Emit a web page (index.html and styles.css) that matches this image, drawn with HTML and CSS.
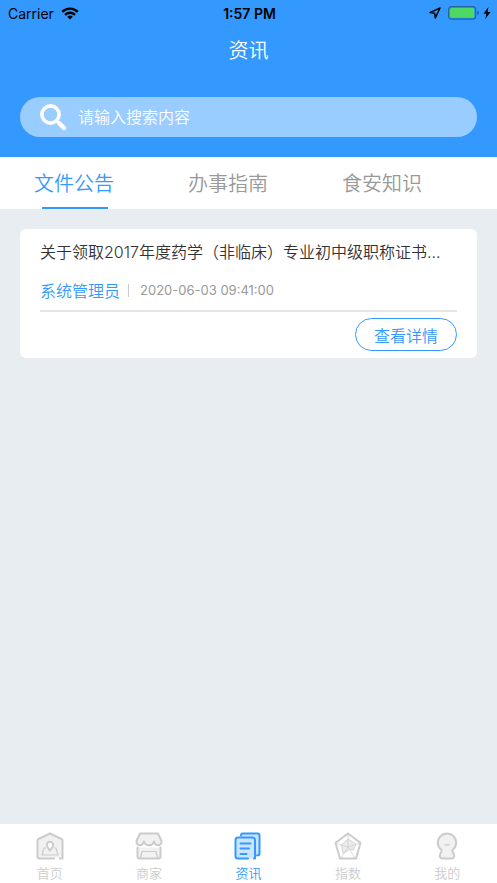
FILE: index.html
```html
<!DOCTYPE html>
<html lang="zh-CN">
<head>
<meta charset="utf-8">
<meta name="viewport" content="width=device-width, initial-scale=1">
<title>资讯</title>
<link rel="stylesheet" href="styles.css">
</head>
<body>
<header class="header">
  <div class="status">
    <div class="status-left">
      <span>Carrier</span>
      <svg width="18" height="13" viewBox="0 0 18 13" fill="none" stroke="#000" stroke-width="2.4"><path d="M1.200 4.800a11.200 11.200 0 0 1 15.600 0M4 7.800a7.200 7.200 0 0 1 10 0"/><path d="M9 12.600 6.200 9.800a4 4 0 0 1 5.600 0z" fill="#000" stroke="none"/></svg>
    </div>
    <span class="time">1:57 PM</span>
    <div class="status-right">
      <svg width="12" height="12" viewBox="0 0 12 12" fill="none" stroke="#000" stroke-width="1.500" stroke-linejoin="round"><path d="M11 1 1 5.600l4.700.7.600 4.700z"/></svg>
      <svg width="32" height="14" viewBox="0 0 32 14"><rect x=".6" y=".6" width="27" height="12.600" rx="3" fill="none" stroke="#2363a8" stroke-width="1.200"/><rect x="2" y="2" width="24.200" height="9.800" rx="1.500" fill="#4cd964"/><path d="M29.200 4.800q1.800.6 1.800 2.200t-1.800 2.200z" fill="#2363a8"/></svg>
      <svg width="8" height="12" viewBox="0 0 8 12"><path d="M5.400 0 .5 6.700h2.900L2.300 12l5.200-7H4.600z"/></svg>
    </div>
  </div>
  <h1 class="title">资讯</h1>
  <label class="search">
    <svg width="27" height="27" viewBox="0 0 27 27" fill="none" stroke="#fff"><circle cx="10.500" cy="10.500" r="8.600" stroke-width="3.600"/><path d="m17 17 1.800 1.800" stroke-width="2.500"/><path d="m19 19 5 5" stroke-width="4.400" stroke-linecap="round"/></svg>
    <input type="search" placeholder="请输入搜索内容" aria-label="搜索">
  </label>
</header>
<nav class="tabs">
  <a class="tab active" href="#notice">文件公告</a>
  <a class="tab" href="#guide">办事指南</a>
  <a class="tab" href="#food">食安知识</a>
</nav>
<main class="content">
  <article class="card">
    <h2 class="card-title">关于领取2017年度药学（非临床）专业初中级职称证书…</h2>
    <div class="meta"><span class="author">系统管理员</span><time class="date">2020-06-03 09:41:00</time></div>
    <div class="actions"><button class="detail" type="button">查看详情</button></div>
  </article>
</main>
<nav class="bottom">
  <a class="item" href="#home">
    <svg width="28" height="28" viewBox="0 0 28 28" fill="none" stroke="#ccc" stroke-width="2"><path d="M14 2 2 8v18h24V8z" fill="#f1f1f1" stroke="none"/><path d="M19 26.500H3.500q-2 0-2-2v-16q0-1 1-1.500L14 1.500 25.500 7q1 .5 1 1.500v18H23" stroke-linejoin="round"/><path d="M10 16H8L6 23h16l-2-7h-2" stroke-width="1.200"/><path d="M14 18.500c-2-2.500-3.200-3.800-3.200-5.600a3.200 3.200 0 0 1 6.400 0c0 1.800-1.200 3.100-3.200 5.600z" fill="#fff"/></svg>
    <span>首页</span>
  </a>
  <a class="item" href="#shop">
    <svg width="28" height="28" viewBox="0 0 28 28" fill="none" stroke="#ccc" stroke-width="2" stroke-linejoin="round" stroke-linecap="round"><path d="M5 1.500h18l3.500 7.500c.5 2.600-1.300 4.200-3.200 4.200S19.700 12 19 9.500c-.6 2.500-2.700 3.700-5 3.700S9.600 12 9 9.500c-.7 2.500-2.400 3.700-4.300 3.700S1 11.600 1.500 9z" fill="#f1f1f1"/><path d="M2.500 15.500v9q0 2 2 2h19q2 0 2-2v-9" fill="#f1f1f1"/><path d="M5.500 25.500 7 19.500h14l1.500 6" stroke-width="1.200"/></svg>
    <span>商家</span>
  </a>
  <a class="item current" href="#news" aria-current="page">
    <svg width="28" height="28" viewBox="0 0 28 28" fill="none" stroke="#39f" stroke-width="2" stroke-linejoin="round" stroke-linecap="round"><path d="M7 3.500q0-2 2-2h14.500q2 0 2 2v18q0 2-2.500 2h-2V5.500H7z" fill="#cce5ff" stroke="none"/><path d="M7 3.500q0-2 2-2h14.500q2 0 2 2v18q0 2-2.500 2"/><rect x="1.500" y="5.500" width="19.500" height="21" rx="2.500" fill="#cce5ff" stroke="none"/><path d="M14 26.500H4q-2.500 0-2.500-2.500V8q0-2.500 2.500-2.500h14.500Q21 5.500 21 8v18.500h-1"/><path d="M6.500 11.500h10M6.500 16.500h8.500M6.500 22h6"/></svg>
    <span>资讯</span>
  </a>
  <a class="item" href="#index">
    <svg width="28" height="28" viewBox="0 0 28 28" fill="none" stroke="#ccc" stroke-width="2"><path d="m14 1.500 12.500 9.500-4.500 15.500H6L1.500 11z"/><path d="m14 7 8 5-2.500 6-4-.500L9 21.500 7.500 13z" fill="#ececec" stroke-width=".8"/><path d="M14 3v12L3 11.500M14 15l11-3.500M14 15 7 26m7-11 7 11" stroke-width=".7"/></svg>
    <span>指数</span>
  </a>
  <a class="item" href="#mine">
    <svg width="28" height="28" viewBox="0 0 28 28" fill="none" stroke="#ccc" stroke-width="2"><path d="M8.700 18.200a9.200 9.200 0 1 1 10.600 0q.4 1.800 1.300 3.500c1.300 2.800.5 4.800-2 4.800h-9.200c-2.500 0-3.300-2-2-4.800q.9-1.700 1.300-3.500z" fill="#f1f1f1" stroke-linejoin="round"/><path d="M11.500 12.800h5" stroke-width="1.400"/></svg>
    <span>我的</span>
  </a>
</nav>
</body>
</html>
```
FILE: styles.css
```css
* { box-sizing: border-box; }
body {
  margin: 0;
  min-height: 100vh;
  display: flex;
  flex-direction: column;
  background: #e8edf1;
  font-family: Inter, "Noto Sans CJK SC", sans-serif;
  font-weight: 350;
  color: #333;
}
a { text-decoration: none; color: inherit; }
svg { display: block; flex: none; }
h1, h2 { margin: 0; font-weight: inherit; }
.header { background: #39f; padding-bottom: 20px; }
.status {
  display: grid;
  grid-template-columns: 1fr auto 1fr;
  align-items: center;
  height: 26px;
  padding: 0 6px 0 8px;
  font-size: 14px;
  font-weight: 400;
  color: #000;
}
.status-left, .status-right { display: flex; align-items: center; gap: 7px; }
.status-right { justify-content: flex-end; gap: 3px; }
.status-right svg:first-child { margin-right: 4px; }
.time { font-weight: 600; }
.title {
  height: 71px;
  padding-top: 11px;
  line-height: 28px;
  font-size: 20px;
  text-align: center;
  color: #fff;
}
.search {
  display: flex;
  align-items: center;
  gap: 11px;
  height: 40px;
  margin: 0 20px;
  padding: 0 20px;
  border-radius: 20px;
  background: #9cf;
}
.search input {
  flex: 1;
  min-width: 0;
  border: 0;
  padding: 0;
  outline: 0;
  background: none;
  font: inherit;
  font-size: 16px;
  color: #fff;
}
.search input::placeholder { color: #fff; opacity: 1; }
.tabs {
  display: flex;
  gap: 74px;
  height: 52px;
  padding-left: 34px;
  background: #fff;
  font-size: 20px;
  line-height: 54px;
  color: #999;
}
.tab { position: relative; height: 52px; white-space: nowrap; }
.active { color: #39f; }
.active::after {
  content: "";
  position: absolute;
  left: 8px;
  right: 6px;
  bottom: 0;
  height: 2px;
  background: #39f;
}
.content { flex: 1; padding: 20px; }
.card { padding: 8px 20px 7px; background: #fff; border-radius: 6px; }
.card-title {
  font-size: 16px;
  line-height: 30px;
  white-space: nowrap;
  overflow: hidden;
}
.meta {
  display: flex;
  align-items: center;
  height: 45px;
  padding-top: 4px;
  border-bottom: 2px solid #e5e5e5;
}
.author { font-size: 16px; line-height: 24px; color: #39f; }
.date {
  margin-left: 8px;
  padding-left: 11px;
  border-left: 1px solid #ccc;
  font-size: 13px;
  font-weight: 400;
  line-height: 13px;
  color: #999;
}
.actions { display: flex; justify-content: flex-end; padding-top: 6px; }
.detail {
  height: 33px;
  padding: 0 18px;
  border: 1px solid #39f;
  border-radius: 17px;
  background: #fff;
  font: inherit;
  font-size: 16px;
  color: #39f;
}
.bottom {
  display: grid;
  grid-template-columns: repeat(5, 1fr);
  padding-top: 8px;
  background: #fff;
  font-size: 13px;
  line-height: 19px;
  color: #ccc;
}
.item { display: flex; flex-direction: column; align-items: center; gap: 4px; }
.current { color: #39f; }
```
